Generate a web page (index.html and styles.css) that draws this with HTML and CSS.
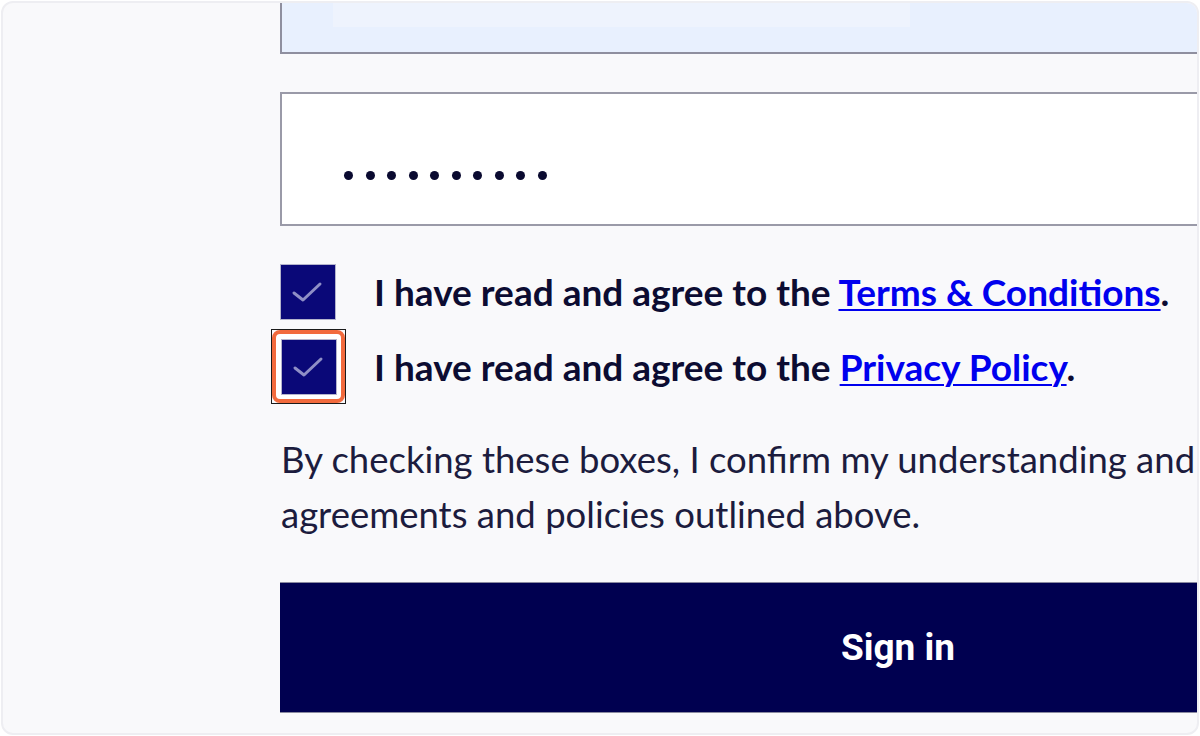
FILE: index.html
```html
<!DOCTYPE html>
<html lang="en">
<head>
<meta charset="utf-8">
<title>Sign in</title>
<link rel="stylesheet" href="styles.css">
</head>
<body>
<div class="frame">
  <form class="form">
    <div class="field field-autofill"><div class="autofill-glow"></div></div>
    <div class="field field-password">
      <span class="dot"></span><span class="dot"></span><span class="dot"></span><span class="dot"></span><span class="dot"></span><span class="dot"></span><span class="dot"></span><span class="dot"></span><span class="dot"></span><span class="dot"></span>
    </div>
    <div class="checks">
      <label class="check-row">
        <span class="box-wrap">
          <span class="box"><svg class="tick" viewBox="0 0 56 56" width="56" height="56"><polyline points="14,29 23,36 40,20" fill="none" stroke="#8f8fc6" stroke-width="3" stroke-linecap="round" stroke-linejoin="round"/></svg></span>
        </span>
        <span class="label-text">I have read and agree to the <a href="#" class="link">Terms &amp; Conditions</a>.</span>
      </label>
      <label class="check-row">
        <span class="box-wrap focused">
          <span class="focus-ring"><span class="box"><svg class="tick" viewBox="0 0 56 56" width="56" height="56"><polyline points="14,29 23,36 40,20" fill="none" stroke="#8f8fc6" stroke-width="3" stroke-linecap="round" stroke-linejoin="round"/></svg></span></span>
        </span>
        <span class="label-text">I have read and agree to the <a href="#" class="link">Privacy Policy</a>.</span>
      </label>
    </div>
    <p class="note">By checking these boxes, I confirm my understanding and agreements and policies outlined above.</p>
    <button type="button" class="signin">Sign in</button>
  </form>
</div>
</body>
</html>
```
FILE: styles.css
```css
html, body {
  margin: 0;
  padding: 0;
  background: #ffffff;
}
.frame {
  margin: 1px;
  height: 730px;
  border: 2px solid #eeeef2;
  border-radius: 12px;
  background: #f9f9fb;
  overflow: hidden;
}
.form {
  margin: -50px 0 0 277px;
  width: 1236px;
  display: flex;
  flex-direction: column;
}
.field {
  box-sizing: border-box;
  width: 100%;
  border: 2px solid #8f8f9f;
}
.field-autofill {
  height: 101px;
  background: #e8f0fe;
  position: relative;
}
.autofill-glow {
  position: absolute;
  left: 51px;
  top: 40px;
  width: 577px;
  height: 32px;
  background: #eef3fd;
}
.field-password {
  margin-top: 38px;
  height: 134px;
  background: #ffffff;
  border-color: #9a9aa8;
  display: flex;
  align-items: center;
  gap: 12.5px;
  padding: 32px 0 0 62px;
}
.dot {
  width: 9px;
  height: 9px;
  border-radius: 50%;
  background: #0a0a30;
}
.checks {
  margin-top: 38px;
  display: flex;
  flex-direction: column;
  gap: 19px;
}
.check-row {
  display: flex;
  align-items: center;
  gap: 38px;
  font-family: Lato, "Liberation Sans", sans-serif;
  font-weight: 700;
  font-size: 37px;
  color: #0c0c32;
}
.label-text {
  margin-top: -2px;
}
.box-wrap {
  width: 56px;
  height: 56px;
  flex: none;
  display: flex;
  align-items: center;
  justify-content: center;
}
.box {
  box-sizing: border-box;
  width: 56px;
  height: 56px;
  background: #0a0878;
  border: 1px solid #b4b4cc;
  display: block;
}
.tick {
  display: block;
  margin: -1px;
}
.focused {
  box-sizing: border-box;
  width: 75px;
  height: 75px;
  margin: -10px -10px -9px -9px;
  border: 1px solid #1a1a1a;
  background: #f9f9fb;
}
.focus-ring {
  box-sizing: border-box;
  width: 73px;
  height: 73px;
  border: 4px solid #f26a3d;
  border-radius: 8px;
  background: #ffffff;
  display: flex;
  align-items: center;
  justify-content: center;
}
.link {
  color: #0000ee;
  text-decoration: underline;
  text-decoration-thickness: 2px;
  text-underline-offset: 3px;
}
.note {
  margin: 37px 0 0 1px;
  font-family: Lato, "Liberation Sans", sans-serif;
  font-weight: 400;
  font-size: 36.5px;
  line-height: 55px;
  color: #1c1c3e;
  width: 940px;
}
.signin {
  margin-top: 40px;
  height: 131px;
  width: 100%;
  border: none;
  border-top: 1px solid #8a8aa0;
  border-bottom: 1px solid #8a8aa0;
  background: #000050;
  color: #ffffff;
  font-family: Roboto, "Liberation Sans", sans-serif;
  font-weight: 700;
  font-size: 37px;
  padding: 0;
}
```
